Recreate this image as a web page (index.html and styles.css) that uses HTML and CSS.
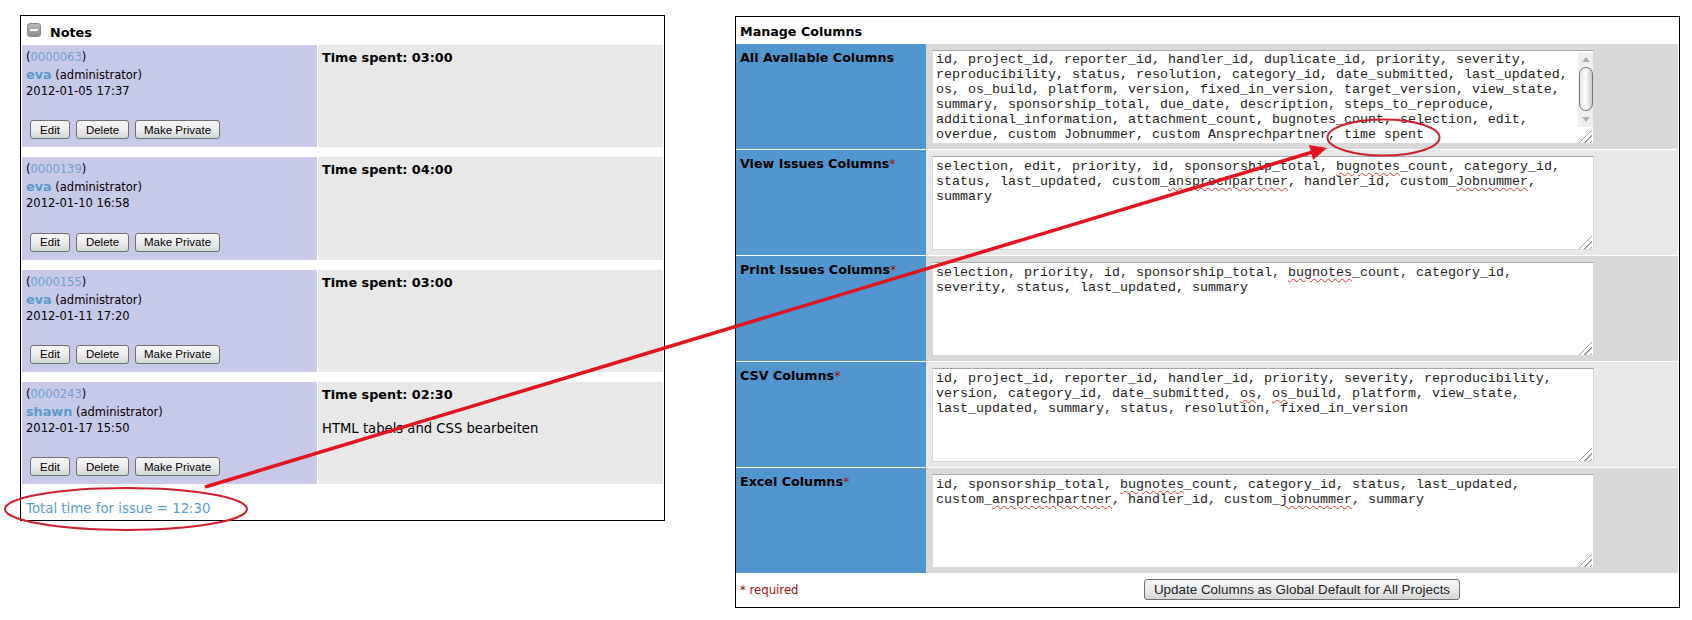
FILE: index.html
```html
<!DOCTYPE html>
<html lang="en">
<head>
<meta charset="utf-8">
<title>Notes and Manage Columns</title>
<link rel="stylesheet" href="styles.css">
</head>
<body>
<main class="canvas">
  <section class="notes">
    <h2 class="notes-title">
      <span class="collapse-icon"><span class="collapse-bar"></span></span>
      Notes
    </h2>

    <article class="note">
      <div class="note-meta">
        <div class="note-id">(<a>0000063</a>)</div>
        <div class="note-user"><a class="user">eva</a> (administrator)</div>
        <div class="note-date">2012-01-05 17:37</div>
        <div class="note-actions">
          <button class="small-btn btn-edit">Edit</button>
          <button class="small-btn btn-delete">Delete</button>
          <button class="small-btn btn-private">Make Private</button>
        </div>
      </div>
      <div class="note-body"><p class="time-spent">Time spent: 03:00</p></div>
    </article>

    <article class="note">
      <div class="note-meta">
        <div class="note-id">(<a>0000139</a>)</div>
        <div class="note-user"><a class="user">eva</a> (administrator)</div>
        <div class="note-date">2012-01-10 16:58</div>
        <div class="note-actions">
          <button class="small-btn btn-edit">Edit</button>
          <button class="small-btn btn-delete">Delete</button>
          <button class="small-btn btn-private">Make Private</button>
        </div>
      </div>
      <div class="note-body"><p class="time-spent">Time spent: 04:00</p></div>
    </article>

    <article class="note">
      <div class="note-meta">
        <div class="note-id">(<a>0000155</a>)</div>
        <div class="note-user"><a class="user">eva</a> (administrator)</div>
        <div class="note-date">2012-01-11 17:20</div>
        <div class="note-actions">
          <button class="small-btn btn-edit">Edit</button>
          <button class="small-btn btn-delete">Delete</button>
          <button class="small-btn btn-private">Make Private</button>
        </div>
      </div>
      <div class="note-body"><p class="time-spent">Time spent: 03:00</p></div>
    </article>

    <article class="note">
      <div class="note-meta">
        <div class="note-id">(<a>0000243</a>)</div>
        <div class="note-user"><a class="user">shawn</a> (administrator)</div>
        <div class="note-date">2012-01-17 15:50</div>
        <div class="note-actions">
          <button class="small-btn btn-edit">Edit</button>
          <button class="small-btn btn-delete">Delete</button>
          <button class="small-btn btn-private">Make Private</button>
        </div>
      </div>
      <div class="note-body">
        <p class="time-spent">Time spent: 02:30</p>
        <p class="note-text">HTML tabels and CSS bearbeiten</p>
      </div>
    </article>

    <div class="total-time">Total time for issue = 12:30</div>
  </section>

  <section class="columns">
    <h2 class="columns-title">Manage Columns</h2>

    <div class="col-row row-dark">
      <div class="col-label">All Available Columns</div>
      <div class="col-value">
        <div class="area area-scroll">
          <div class="area-text">id, project_id, reporter_id, handler_id, duplicate_id, priority, severity,
reproducibility, status, resolution, category_id, date_submitted, last_updated,
os, os_build, platform, version, fixed_in_version, target_version, view_state,
summary, sponsorship_total, due_date, description, steps_to_reproduce,
additional_information, attachment_count, bugnotes_count, selection, edit,
overdue, custom Jobnummer, custom Ansprechpartner, time spent</div>
          <div class="scrollbar">
            <span class="arrow-up"></span>
            <span class="thumb"></span>
            <span class="arrow-down"></span>
          </div>
          <span class="grip"></span>
        </div>
      </div>
    </div>

    <div class="col-row">
      <div class="col-label">View Issues Columns<span class="req">*</span></div>
      <div class="col-value">
        <div class="area">
          <div class="area-text">selection, edit, priority, id, sponsorship_total, <span class="typo">bugnotes</span>_count, category_id,
status, last_updated, custom_<span class="typo">ansprechpartner</span>, handler_id, custom_<span class="typo">Jobnummer</span>,
summary</div>
          <span class="grip"></span>
        </div>
      </div>
    </div>

    <div class="col-row row-dark">
      <div class="col-label">Print Issues Columns<span class="req">*</span></div>
      <div class="col-value">
        <div class="area">
          <div class="area-text">selection, priority, id, sponsorship_total, <span class="typo">bugnotes</span>_count, category_id,
severity, status, last_updated, summary</div>
          <span class="grip"></span>
        </div>
      </div>
    </div>

    <div class="col-row">
      <div class="col-label">CSV Columns<span class="req">*</span></div>
      <div class="col-value">
        <div class="area">
          <div class="area-text">id, project_id, reporter_id, handler_id, priority, severity, reproducibility,
version, category_id, date_submitted, <span class="typo">os</span>, <span class="typo">os</span>_build, platform, view_state,
last_updated, summary, status, resolution, fixed_in_version</div>
          <span class="grip"></span>
        </div>
      </div>
    </div>

    <div class="col-row row-dark">
      <div class="col-label">Excel Columns<span class="req">*</span></div>
      <div class="col-value">
        <div class="area">
          <div class="area-text">id, sponsorship_total, <span class="typo">bugnotes</span>_count, category_id, status, last_updated,
custom_<span class="typo">ansprechpartner</span>, handler_id, custom_<span class="typo">jobnummer</span>, summary</div>
          <span class="grip"></span>
        </div>
      </div>
    </div>

    <div class="col-footer">
      <div class="required-note">* required</div>
      <button class="update-btn">Update Columns as Global Default for All Projects</button>
    </div>
  </section>

  <svg class="annotations" viewBox="0 0 1692 620" aria-hidden="true">
    <ellipse class="mark-ring" cx="126" cy="509" rx="121" ry="21"/>
    <ellipse class="mark-ring" cx="1383.5" cy="137.5" rx="56" ry="18"/>
    <line class="mark-line" x1="205" y1="487" x2="1316" y2="151"/>
    <polygon class="mark-head" points="1327,148 1309,145 1311,152 1313,160"/>
  </svg>
</main>
</body>
</html>
```

FILE: styles.css
```css
* { box-sizing: border-box; }

html, body {
  margin: 0;
  padding: 0;
  background: #fff;
}

.canvas {
  position: relative;
  width: 1692px;
  height: 620px;
  display: flex;
  align-items: flex-start;
  padding: 15px 0 0 20px;
  overflow: hidden;
  font-family: "DejaVu Sans", Verdana, sans-serif;
  color: #000;
}

/* Notes panel */
.notes {
  width: 645px;
  height: 506px;
  border: 1px solid #000;
  padding: 0 1px;
  display: flex;
  flex-direction: column;
}

.notes-title {
  margin: 0;
  height: 29px;
  display: flex;
  align-items: center;
  gap: 9px;
  padding: 4px 0 0 5px;
  font-size: 12.8px;
  font-weight: bold;
}

.collapse-icon {
  width: 14px;
  height: 14px;
  margin-top: -5px;
  border-radius: 3px;
  background: linear-gradient(#b9b9b9, #8b8b8b);
  border: 1px solid #8a8a8a;
  display: flex;
  align-items: center;
  justify-content: center;
}

.collapse-bar {
  width: 8px;
  height: 2px;
  background: #f2f2f2;
}

.note {
  height: 102.33px;
  display: flex;
  margin-bottom: 10px;
}

.note-meta {
  width: 295px;
  background: #c8c8e8;
  padding: 5px 4px 0;
  margin-right: 1px;
  font-size: 11.5px;
  line-height: 14px;
  display: flex;
  flex-direction: column;
}

.note-id a { color: #6fa1d6; }

.note-user {
  margin-top: 3px;
  line-height: 15px;
}

.user {
  color: #5b9bc9;
  font-weight: bold;
  font-size: 12.8px;
}

.note-date { margin-top: 1px; }

.note-actions {
  margin-top: auto;
  margin-bottom: 8px;
  display: flex;
  gap: 6px;
  padding-left: 4px;
}

.small-btn {
  height: 19px;
  padding: 0;
  border: 1px solid #707070;
  border-radius: 3px;
  background: linear-gradient(#f6f6f6 0%, #ececec 50%, #d6d6d6 100%);
  font-family: "Liberation Sans", Arial, sans-serif;
  font-size: 11.5px;
  color: #000;
}

.btn-edit { width: 40px; }
.btn-delete { width: 53px; }
.btn-private { width: 85px; }

.note-body {
  flex: 1;
  background: #e8e8e8;
  padding: 6px 4px 0;
}

.note-body p { margin: 0; }

.time-spent {
  font-size: 12.8px;
  font-weight: bold;
  line-height: 14px;
}

.note-body .note-text {
  margin-top: 19px;
  font-size: 13.2px;
  line-height: 16px;
}

.total-time {
  margin-top: -2px;
  padding: 9px 4px 0;
  font-size: 13.33px;
  line-height: 16px;
  color: #5b9bc9;
}

/* Manage columns panel */
.columns {
  width: 945px;
  height: 592px;
  margin-left: 70px;
  margin-top: 1px;
  border: 1px solid #000;
  padding: 0 1px 0 0;
  display: flex;
  flex-direction: column;
}

.columns-title {
  margin: 0;
  height: 27px;
  padding: 7px 0 0 4px;
  font-size: 12.7px;
  line-height: 15px;
  font-weight: bold;
}

.col-row {
  height: 106px;
  display: flex;
  background: #e8e8e8;
  border-bottom: 1px solid #fff;
}

.row-dark { background: #d8d8d8; }

.col-label {
  width: 190px;
  margin-right: 1px;
  background: #5196ce;
  padding: 6px 4px 0;
  font-size: 12.7px;
  line-height: 15px;
  font-weight: bold;
}

.req { color: #a01010; font-weight: normal; }

.col-value {
  flex: 1;
  padding: 6px 0 0 5px;
}

.area {
  position: relative;
  width: 662px;
  height: 94px;
  background: #fff;
  border: 1px solid #d8d8d8;
  border-top-color: #a8a8a8;
  display: flex;
  justify-content: space-between;
}

.area-text {
  padding: 2px 0 0 3px;
  font-family: "Liberation Mono", "Courier New", monospace;
  font-size: 13.33px;
  line-height: 15px;
  white-space: pre;
  color: #222;
}

.area-scroll .area-text { padding-top: 1px; }

.typo {
  text-decoration: underline wavy #d03030 1px;
  text-underline-offset: 2px;
}

.scrollbar {
  width: 15px;
  margin-top: 2px;
  height: 74px;
  background: #eeeeee;
  display: flex;
  flex-direction: column;
  align-items: center;
}

.arrow-up {
  margin-top: 4px;
  border: 4px solid transparent;
  border-top: 0;
  border-bottom: 5px solid #b0b0b0;
}

.arrow-down {
  margin-top: 6px;
  border: 4px solid transparent;
  border-bottom: 0;
  border-top: 5px solid #b0b0b0;
}

.thumb {
  width: 14px;
  height: 44px;
  margin-top: 5px;
  border: 1px solid #777;
  border-radius: 7px;
  background: linear-gradient(90deg, #e4e4e4, #fdfdfd 45%, #c8c8c8);
}

.grip {
  position: absolute;
  right: 1px;
  bottom: 0;
  width: 14px;
  height: 14px;
  background: repeating-linear-gradient(135deg, transparent 0 2px, #9a9a9a 2px 3px, transparent 3px 4px);
  clip-path: polygon(100% 0, 100% 100%, 0 100%);
}

.col-footer {
  flex: 1;
  display: flex;
  align-items: flex-start;
  padding: 5px 0 0 4px;
}

.required-note {
  margin-top: 4px;
  width: 404px;
  font-size: 11.7px;
  line-height: 14px;
  color: #a01010;
}

.update-btn {
  width: 316px;
  height: 21px;
  padding: 0;
  border: 1px solid #707070;
  border-radius: 3px;
  background: linear-gradient(#f6f6f6 0%, #ececec 50%, #d6d6d6 100%);
  font-family: "Liberation Sans", Arial, sans-serif;
  font-size: 13.43px;
  color: #222;
}

/* Hand-drawn annotations lying over the screenshot */
.annotations {
  position: absolute;
  left: 0;
  top: 0;
  width: 1692px;
  height: 620px;
  pointer-events: none;
}

.mark-ring {
  fill: none;
  stroke: #cf1f2c;
  stroke-width: 2;
}

.mark-line {
  stroke: #e2141f;
  stroke-width: 3.5;
}

.mark-head { fill: #e2141f; }
```
